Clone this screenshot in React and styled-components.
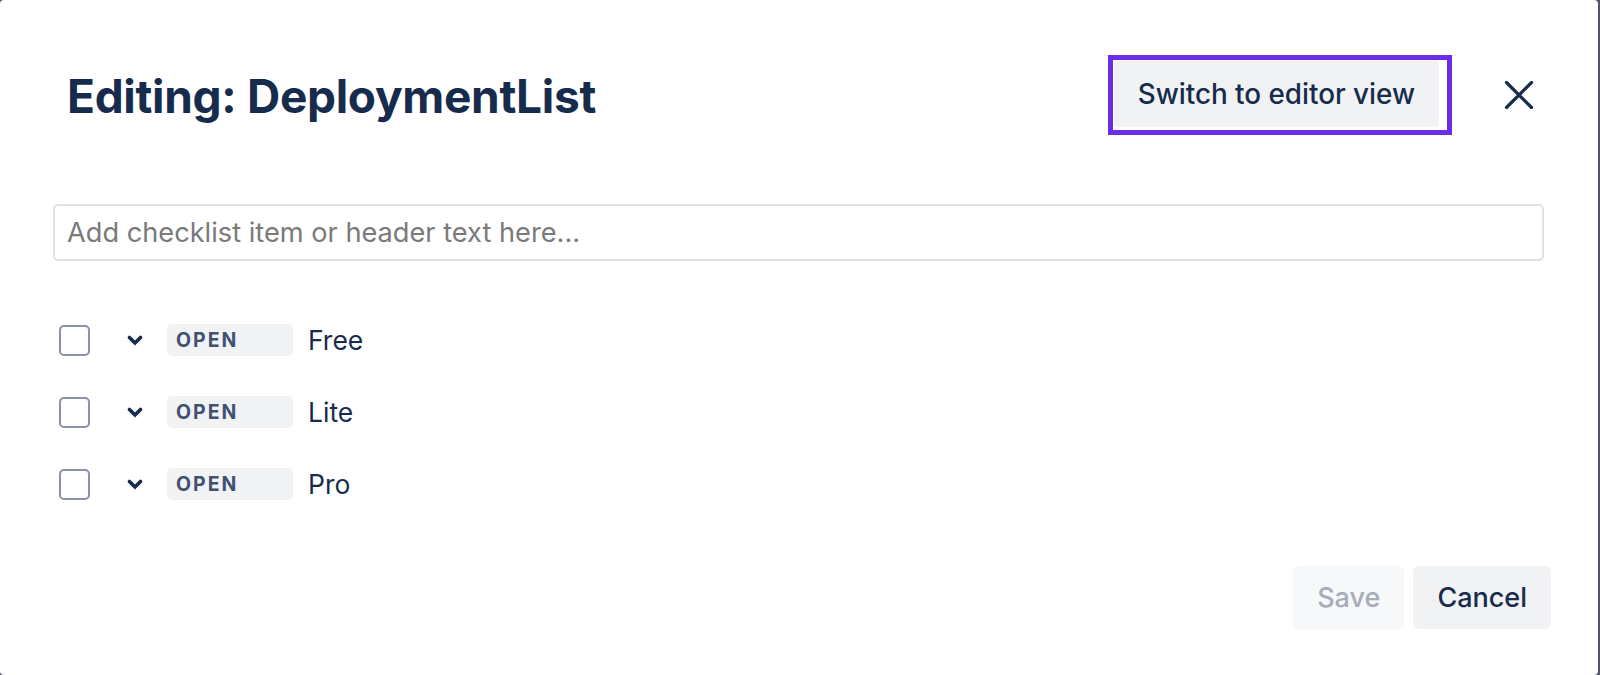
import React from "react";
import styled, { createGlobalStyle } from "styled-components";

const Global = createGlobalStyle`
  html, body { margin: 0; padding: 0; background: #4f5565; }
  body { font-family: Inter, "Noto Sans", "Liberation Sans", sans-serif; }
  * { box-sizing: border-box; }
`;

const Dialog = styled.div`
  width: 1598px;
  height: 675px;
  background: #ffffff;
  border-radius: 4px;
  display: flex;
  flex-direction: column;
  padding: 55px 47px 0 53px;
  color: #172b4d;
`;

const Header = styled.div`
  height: 80px;
  display: flex;
  align-items: center;
  padding-left: 14px;
  padding-right: 12px;
`;

const Title = styled.h1`
  flex: 1;
  margin: 0;
  font-size: 46px;
  font-weight: 700;
  letter-spacing: -0.3px;
  color: #172b4d;
  line-height: 1;
  padding-top: 2px;
`;

const FocusRing = styled.div`
  border: 5px solid #6a2ee4;
  padding: 1px 8px 3px 1px;
  display: flex;
`;

const SwitchButton = styled.button`
  height: 66px;
  padding: 0 24px;
  border: none;
  border-radius: 4px;
  background: #f1f2f4;
  color: #172b4d;
  font-family: inherit;
  font-size: 27.8px;
  font-weight: 500;
  cursor: pointer;
`;

const CloseButton = styled.button`
  margin-left: 47px;
  width: 40px;
  height: 40px;
  padding: 0;
  border: none;
  background: transparent;
  display: flex;
  align-items: center;
  justify-content: center;
  color: #172b4d;
`;

const TextInput = styled.input`
  margin-top: 69px;
  margin-right: 7px;
  height: 57px;
  border: 2px solid #dfe1e6;
  border-radius: 5px;
  padding: 0 12px;
  font-family: inherit;
  font-size: 27.2px;
  color: #172b4d;
  outline: none;
  &::placeholder { color: #7a7a7a; }
`;

const List = styled.div`
  margin-top: 43px;
  display: flex;
  flex-direction: column;
`;

const Row = styled.div`
  height: 72px;
  display: flex;
  align-items: center;
  padding-left: 6px;
`;

const Checkbox = styled.span`
  width: 31px;
  height: 31px;
  border: 2.5px solid #8993a4;
  border-radius: 5px;
  background: #fff;
  flex-shrink: 0;
`;

const Chevron = styled.span`
  margin-left: 33px;
  width: 24px;
  height: 24px;
  display: flex;
  align-items: center;
  justify-content: center;
  color: #172b4d;
`;

const Badge = styled.span`
  margin-left: 20px;
  width: 126px;
  height: 32px;
  border-radius: 5px;
  background: #f1f2f4;
  color: #42526e;
  font-size: 19.5px;
  font-weight: 700;
  letter-spacing: 2px;
  text-transform: uppercase;
  display: flex;
  align-items: center;
  padding-left: 9px;
`;

const Label = styled.span`
  margin-left: 15px;
  font-size: 26.5px;
  color: #172b4d;
`;

const Footer = styled.div`
  margin-top: 46px;
  display: flex;
  justify-content: flex-end;
  gap: 9px;
`;

const FooterButton = styled.button`
  height: 63px;
  padding: 0 24px;
  border: none;
  border-radius: 6px;
  font-family: inherit;
  font-size: 27px;
  font-weight: 500;
  background: ${(p) => (p.$disabled ? "#f7f8f9" : "#f1f2f4")};
  color: ${(p) => (p.$disabled ? "#a5adba" : "#172b4d")};
`;

const ChevronIcon = () => (
  <svg width="16" height="11" viewBox="0 0 16 11">
    <polyline points="2.5,2.5 8,8 13.5,2.5" fill="none" stroke="currentColor" strokeWidth="3.6" strokeLinecap="round" strokeLinejoin="miter" />
  </svg>
);

const CloseIcon = () => (
  <svg width="30" height="28" viewBox="0 0 30 28">
    <path d="M2.5 1.5 L27.5 26.5 M27.5 1.5 L2.5 26.5" stroke="currentColor" strokeWidth="3.2" strokeLinecap="round" />
  </svg>
);

const items = ["Free", "Lite", "Pro"];

export default function App() {
  return (
    <>
      <Global />
      <Dialog>
        <Header>
          <Title>Editing: DeploymentList</Title>
          <FocusRing>
            <SwitchButton>Switch to editor view</SwitchButton>
          </FocusRing>
          <CloseButton aria-label="Close">
            <CloseIcon />
          </CloseButton>
        </Header>
        <TextInput placeholder="Add checklist item or header text here..." />
        <List>
          {items.map((it) => (
            <Row key={it}>
              <Checkbox />
              <Chevron>
                <ChevronIcon />
              </Chevron>
              <Badge>Open</Badge>
              <Label>{it}</Label>
            </Row>
          ))}
        </List>
        <Footer>
          <FooterButton $disabled>Save</FooterButton>
          <FooterButton>Cancel</FooterButton>
        </Footer>
      </Dialog>
    </>
  );
}
